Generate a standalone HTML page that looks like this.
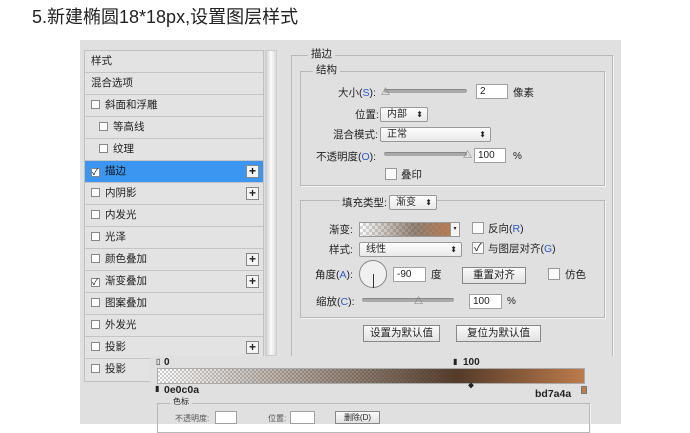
<!DOCTYPE html>
<html><head><meta charset="utf-8"><style>
*{margin:0;padding:0;box-sizing:border-box}
body{width:690px;height:424px;background:#fff;position:relative;overflow:hidden;font-family:"Liberation Sans","Noto Sans CJK SC",sans-serif;font-size:11px;color:#222}
.a{position:absolute}
.t{position:absolute;white-space:nowrap;line-height:1}
.row{position:absolute;left:85px;width:178px;height:22px;border-bottom:1px solid #c4c4c4;background:#e3e3e3;padding-left:6px;line-height:21px;font-size:10.5px}
.cb{display:inline-block;width:9px;height:9px;border:1px solid #888;background:#fff;vertical-align:-1px;margin-right:5px}
.plus{position:absolute;right:4px;top:4px;width:13px;height:13px;border:1px solid #888;background:#f4f4f4;font-size:12px;line-height:11px;text-align:center;font-weight:bold}
.box{position:absolute;border:1px solid #b8b8b8;box-shadow:1px 1px 0 #f4f4f4}
.inp{position:absolute;background:#fff;border:1px solid #a0a0a0;height:15px;font-size:10px;line-height:13px;padding-left:3px}
.sel{position:absolute;background:linear-gradient(#fdfdfd,#e9e9e9);border:1px solid #999;height:15px;font-size:10px;line-height:13px;padding-left:6px;border-radius:2px}
.sel:after{content:"⬍";position:absolute;right:4px;top:0;font-size:8px}
.btn{position:absolute;background:linear-gradient(#fafafa,#e2e2e2);border:1px solid #888;height:17px;font-size:10.5px;line-height:15px;text-align:center}
.sl{position:absolute;height:4px;background:#a9a9a9;border-radius:2px;border-top:1px solid #888}
</style></head><body>
<div class="t" style="left:32px;top:8px;font-size:18px;color:#222">5.新建椭圆18*18px,设置图层样式</div>
<div class="a" style="left:80px;top:40px;width:541px;height:384px;background:#e0e0e0"></div>
<!-- left list -->
<div class="a" style="left:84px;top:50px;width:180px;height:332px;border:1px solid #c0c0c0;background:#e3e3e3"></div>
<div class="row" style="top:51px">样式</div>
<div class="row" style="top:73px">混合选项</div>
<div class="row" style="top:95px"><span class="cb"></span>斜面和浮雕</div>
<div class="row" style="top:117px;padding-left:14px"><span class="cb"></span>等高线</div>
<div class="row" style="top:139px;padding-left:14px"><span class="cb"></span>纹理</div>
<div class="row" style="top:161px;background:#3a96f0;color:#111"><span class="cb" style="font-size:9px;line-height:7px">✓</span>描边<span class="plus">+</span></div>
<div class="row" style="top:183px"><span class="cb"></span>内阴影<span class="plus">+</span></div>
<div class="row" style="top:205px"><span class="cb"></span>内发光</div>
<div class="row" style="top:227px"><span class="cb"></span>光泽</div>
<div class="row" style="top:249px"><span class="cb"></span>颜色叠加<span class="plus">+</span></div>
<div class="row" style="top:271px"><span class="cb" style="font-size:9px;line-height:7px">✓</span>渐变叠加<span class="plus">+</span></div>
<div class="row" style="top:293px"><span class="cb"></span>图案叠加</div>
<div class="row" style="top:315px"><span class="cb"></span>外发光</div>
<div class="row" style="top:337px"><span class="cb"></span>投影<span class="plus">+</span></div>
<div class="row" style="top:359px;border-bottom:none"><span class="cb"></span>投影</div>
<div class="a" style="left:265px;top:50px;width:12px;height:306px;background:linear-gradient(90deg,#d0d0d0,#fbfbfb 50%,#d8d8d8);border:1px solid #ccc"></div>
<!-- right -->
<div class="box" style="left:291px;top:55px;width:322px;height:302px;border-bottom:none"></div>
<div class="t" style="left:308px;top:49px;background:#e0e0e0;padding:0 3px;font-size:10.5px">描边</div>
<div class="box" style="left:300px;top:71px;width:305px;height:115px"></div>
<div class="t" style="left:313px;top:65px;background:#e0e0e0;padding:0 3px;font-size:10.5px">结构</div>
<div class="t" style="left:338px;top:88px;font-size:10.5px">大小(<span style="color:#2a5ad0">S</span>):</div>
<div class="sl" style="left:384px;top:89px;width:83px"></div>
<div class="t" style="left:381px;top:88px;font-size:9px;color:#666">△</div>
<div class="inp" style="left:476px;top:84px;width:32px">2</div>
<div class="t" style="left:513px;top:88px;font-size:10.5px">像素</div>
<div class="t" style="left:355px;top:110px;font-size:10.5px">位置:</div>
<div class="sel" style="left:380px;top:107px;width:48px">内部</div>
<div class="t" style="left:333px;top:130px;font-size:10.5px">混合模式:</div>
<div class="sel" style="left:380px;top:127px;width:111px">正常</div>
<div class="t" style="left:316px;top:152px;font-size:10.5px">不透明度(<span style="color:#2a5ad0">O</span>):</div>
<div class="sl" style="left:384px;top:152px;width:83px"></div>
<div class="t" style="left:463px;top:151px;font-size:9px;color:#666">△</div>
<div class="inp" style="left:474px;top:148px;width:32px">100</div>
<div class="t" style="left:513px;top:152px;font-size:10px">%</div>
<div class="a" style="left:385px;top:168px;width:12px;height:12px;border:1px solid #999;background:#fafafa"></div>
<div class="t" style="left:401px;top:170px;font-size:10.5px">叠印</div>

<div class="box" style="left:300px;top:200px;width:305px;height:118px"></div>
<div class="t" style="left:340px;top:198px;background:#e0e0e0;padding:0 2px;font-size:10.5px">填充类型:</div>
<div class="sel" style="left:389px;top:195px;width:48px">渐变</div>
<div class="t" style="left:329px;top:225px;font-size:10.5px">渐变:</div>
<div class="a" style="left:359px;top:222px;width:100px;height:15px;border:1px solid #999;background:linear-gradient(90deg,rgba(14,12,10,0),rgba(80,55,35,.6) 55%,#bd7a4a),repeating-conic-gradient(#d8d8d8 0 25%,#fff 0 50%) 0 0/6px 6px"></div>
<div class="a" style="left:450px;top:222px;width:10px;height:15px;border:1px solid #999;background:#f4f4f4;font-size:6px;text-align:center;line-height:13px">▾</div>
<div class="a" style="left:472px;top:222px;width:12px;height:12px;border:1px solid #999;background:#fafafa"></div>
<div class="t" style="left:488px;top:224px;font-size:10.5px">反向(<span style="color:#2a5ad0">R</span>)</div>
<div class="t" style="left:329px;top:245px;font-size:10.5px">样式:</div>
<div class="sel" style="left:359px;top:242px;width:103px">线性</div>
<div class="a" style="left:472px;top:242px;width:12px;height:12px;border:1px solid #999;background:#fafafa;font-size:11px;line-height:10px;text-align:center">✓</div>
<div class="t" style="left:488px;top:244px;font-size:10.5px">与图层对齐(<span style="color:#2a5ad0">G</span>)</div>
<div class="t" style="left:315px;top:270px;font-size:10.5px">角度(<span style="color:#2a5ad0">A</span>):</div>
<div class="a" style="left:359px;top:260px;width:28px;height:28px;border-radius:50%;border:1px solid #888;background:#f0f0f0"></div>
<div class="a" style="left:373px;top:274px;width:1px;height:14px;background:#333"></div>
<div class="inp" style="left:393px;top:267px;width:33px">-90</div>
<div class="t" style="left:431px;top:270px;font-size:10.5px">度</div>
<div class="btn" style="left:462px;top:267px;width:64px">重置对齐</div>
<div class="a" style="left:548px;top:268px;width:12px;height:12px;border:1px solid #999;background:#fafafa"></div>
<div class="t" style="left:565px;top:270px;font-size:10.5px">仿色</div>
<div class="t" style="left:316px;top:297px;font-size:10.5px">缩放(<span style="color:#2a5ad0">C</span>):</div>
<div class="sl" style="left:362px;top:298px;width:92px"></div>
<div class="t" style="left:414px;top:297px;font-size:9px;color:#666">△</div>
<div class="inp" style="left:469px;top:294px;width:33px">100</div>
<div class="t" style="left:507px;top:297px;font-size:10px">%</div>
<div class="btn" style="left:363px;top:325px;width:77px">设置为默认值</div>
<div class="btn" style="left:456px;top:325px;width:85px">复位为默认值</div>
<!-- gradient editor -->
<div class="a" style="left:150px;top:356px;width:471px;height:68px;background:#e0e0e0"></div>
<div class="t" style="left:156px;top:358px;font-size:8px">▯</div>
<div class="t" style="left:164px;top:358px;font-size:10px;font-weight:bold">0</div>
<div class="t" style="left:453px;top:358px;font-size:8px">▮</div>
<div class="t" style="left:463px;top:358px;font-size:10px;font-weight:bold">100</div>
<div class="a" style="left:157px;top:368px;width:428px;height:16px;border:1px solid #aaa;background:linear-gradient(90deg,rgba(14,12,10,0) 0%,rgba(75,50,32,.95) 70%,#bd7a4a 100%),repeating-conic-gradient(#cfcfcf 0 25%,#fff 0 50%) 0 0/4px 4px"></div>
<div class="t" style="left:155px;top:385px;font-size:8px">▮</div>
<div class="t" style="left:164px;top:385px;font-size:10.5px;font-weight:bold">0e0c0a</div>
<div class="t" style="left:468px;top:384px;font-size:6px">◆</div>
<div class="t" style="left:535px;top:389px;font-size:10.5px;font-weight:bold">bd7a4a</div>
<div class="a" style="left:581px;top:386px;width:6px;height:8px;border:1px solid #777;background:#bd7a4a"></div>
<div class="box" style="left:157px;top:403px;width:433px;height:30px"></div>
<div class="t" style="left:170px;top:398px;background:#e0e0e0;padding:0 3px;font-size:8px">色标</div>
<div class="t" style="left:175px;top:415px;font-size:8px;color:#555">不透明度:</div>
<div class="inp" style="left:215px;top:411px;width:22px;height:13px"></div>
<div class="t" style="left:268px;top:415px;font-size:8px;color:#555">位置:</div>
<div class="inp" style="left:290px;top:411px;width:25px;height:13px"></div>
<div class="btn" style="left:335px;top:411px;width:45px;height:13px;font-size:8px;line-height:11px">删除(D)</div>
</body></html>
